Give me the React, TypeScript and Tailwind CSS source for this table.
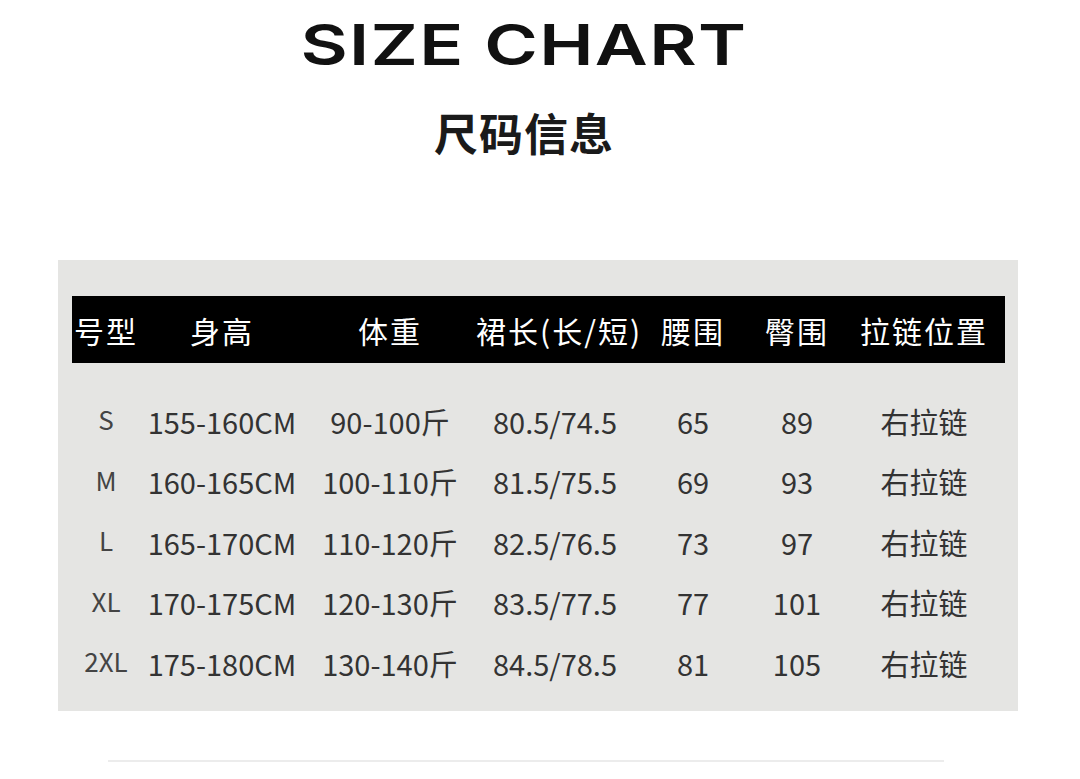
import React from "react";

const COLS = "grid grid-cols-[68px_164px_172px_158px_118px_90px_164px]";

const HEAD = ["号型", "身高", "体重", "裙长(长/短)", "腰围", "臀围", "拉链位置"];

const ROWS = [
  ["S", "155-160CM", "90-100斤", "80.5/74.5", "65", "89", "右拉链"],
  ["M", "160-165CM", "100-110斤", "81.5/75.5", "69", "93", "右拉链"],
  ["L", "165-170CM", "110-120斤", "82.5/76.5", "73", "97", "右拉链"],
  ["XL", "170-175CM", "120-130斤", "83.5/77.5", "77", "101", "右拉链"],
  ["2XL", "175-180CM", "130-140斤", "84.5/78.5", "81", "105", "右拉链"],
];

export default function App() {
  return (
    <div className="h-[779px] w-[1080px] overflow-hidden bg-white font-['Noto_Sans_CJK_SC',sans-serif]">
      <div className="flex flex-col items-center pr-[32px] pt-[16px]">
        <h1 className="inline-block scale-x-[1.3] font-['Inter',sans-serif] text-[56px] font-semibold leading-[58px] tracking-[1px] text-[#111]">
          SIZE CHART
        </h1>
        <h2 className="mt-[32px] text-[44px] font-bold leading-[52px] tracking-[1px] text-[#1a1a1a]">
          尺码信息
        </h2>
      </div>

      <section className="ml-[58px] mt-[102px] w-[960px] bg-[#e5e5e3] pb-[17px] pl-[14px] pt-[36px]">
        <div className={`${COLS} h-[67px] w-[933px] items-center bg-black text-[30px] text-white`}>
          {HEAD.map((h) => (
            <span key={h} className="whitespace-nowrap text-center leading-none tracking-[2px]">
              {h}
            </span>
          ))}
        </div>
        <div className="mt-[28px] flex flex-col">
          {ROWS.map((row) => (
            <div key={row[0]} className={`${COLS} h-[60.5px] items-center text-[29px] text-[#333]`}>
              {row.map((cell, i) => (
                <span
                  key={i}
                  className={
                    i === 0
                      ? "-mt-[4px] whitespace-nowrap text-center text-[26px] leading-none text-[#444]"
                      : "whitespace-nowrap text-center leading-none"
                  }
                >
                  {cell}
                </span>
              ))}
            </div>
          ))}
        </div>
      </section>

      <div className="ml-[108px] mt-[49px] h-[2px] w-[836px] bg-[#ececec]" />
    </div>
  );
}
